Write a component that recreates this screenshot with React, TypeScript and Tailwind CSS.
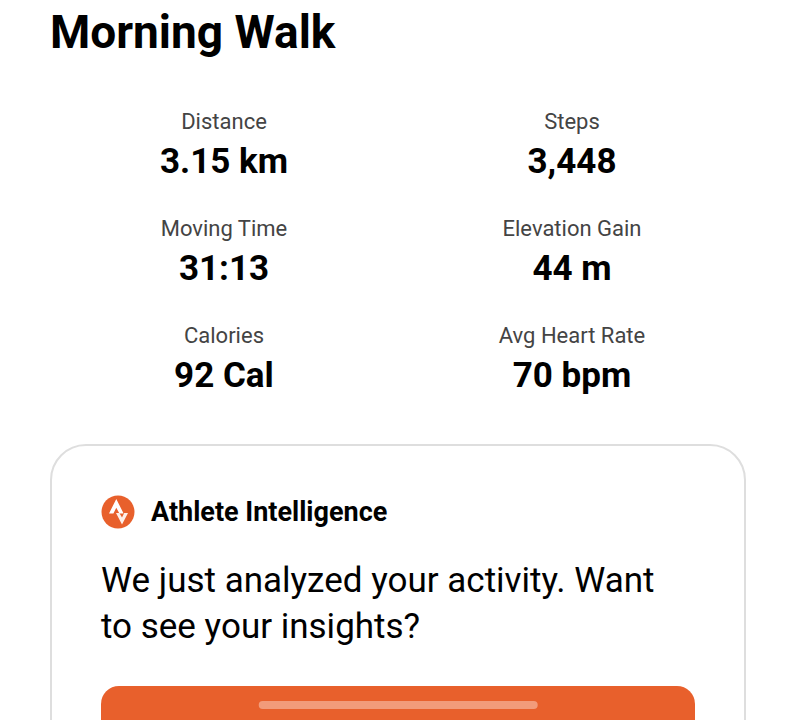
const stats = [
  { label: "Distance", value: "3.15 km" },
  { label: "Steps", value: "3,448" },
  { label: "Moving Time", value: "31:13" },
  { label: "Elevation Gain", value: "44 m" },
  { label: "Calories", value: "92 Cal" },
  { label: "Avg Heart Rate", value: "70 bpm" },
];

function BrandMark() {
  return (
    <svg viewBox="0 0 34 34" className="size-[34px] shrink-0" aria-hidden="true">
      <circle cx="17" cy="17" r="16.5" fill="#e8602c" />
      <path d="M8 18.5 L15.3 4 L22.6 18.5 H18.4 L15.3 12.7 L12.4 18.5 Z" fill="#fff" />
      <path d="M15 18 H18.4 L21 22.6 L23.2 18 H27 L21 29.5 Z" fill="#fff" fillOpacity="0.9" />
    </svg>
  );
}

export default function App() {
  return (
    <div className="relative h-screen overflow-hidden bg-white font-['Roboto',sans-serif] text-black">
      <main className="px-[50px] pt-1">
        <h1 className="text-[46px] leading-14 font-bold">Morning Walk</h1>

        <dl className="mt-[46px] grid grid-cols-2 gap-y-7 text-center">
          {stats.map((stat) => (
            <div key={stat.label}>
              <dt className="text-[22px] leading-8 text-[#444444]">{stat.label}</dt>
              <dd className="text-[35px] leading-[47px] font-bold">{stat.value}</dd>
            </div>
          ))}
        </dl>

        <section className="mt-[45px] rounded-[36px] border-2 border-[#dedede] px-[49px] py-12">
          <div className="flex items-center gap-4">
            <BrandMark />
            <h2 className="text-[27px] leading-9 font-bold">Athlete Intelligence</h2>
          </div>
          <p className="mt-7 pr-6 text-[35px] leading-[46px]">
            We just analyzed your activity. Want to see your insights?
          </p>
          <button
            type="button"
            aria-label="See insights"
            className="mt-9 h-24 w-full rounded-[18px] bg-[#e8602c]"
          />
        </section>
      </main>
      <div className="absolute bottom-[11px] left-1/2 h-2 w-[35%] -translate-x-1/2 rounded-full bg-[#f29b7a]" />
    </div>
  );
}
